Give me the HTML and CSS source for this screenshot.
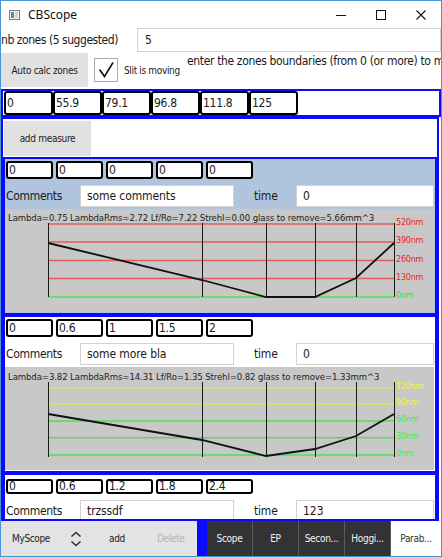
FILE: index.html
```html
<!DOCTYPE html>
<html>
<head>
<meta charset="utf-8">
<title>CBScope</title>
<link rel="stylesheet" href="styles.css">
</head>
<body>
<div class="window">
  <div class="titlebar">
    <svg class="appicon" width="11" height="10" viewBox="0 0 11 10">
      <rect x="0.5" y="0.5" width="10" height="9" fill="#f4f4f4" stroke="#7a7a7a"/>
      <rect x="2" y="2" width="3" height="6" fill="#3d9b86"/>
      <rect x="6" y="2" width="3" height="6" fill="#c9d3d0"/>
    </svg>
    <span class="title">CBScope</span>
    <div class="controls">
      <div class="ctl"><svg width="12" height="12" viewBox="0 0 12 12"><line x1="1" y1="6.5" x2="11" y2="6.5" stroke="#111" stroke-width="1"/></svg></div>
      <div class="ctl"><svg width="12" height="12" viewBox="0 0 12 12"><rect x="1.5" y="1.5" width="9" height="9" fill="none" stroke="#111" stroke-width="1"/></svg></div>
      <div class="ctl"><svg width="12" height="12" viewBox="0 0 12 12"><path d="M1.5 1.5 L10.5 10.5 M10.5 1.5 L1.5 10.5" stroke="#111" stroke-width="1.1"/></svg></div>
    </div>
  </div>

  <div class="row-nb">
    <span class="nb-label">nb zones (5 suggested)</span>
    <div class="field nb-field">5</div>
  </div>

  <div class="row-auto">
    <div class="btn auto-btn">Auto calc zones</div>
    <div class="checkbox">
      <svg width="24" height="24" viewBox="0 0 24 24"><path d="M5.5 11.5 L10.5 18.5 L19 4.5" fill="none" stroke="#111" stroke-width="1.6"/></svg>
    </div>
    <span class="slit">Slit is moving</span>
    <span class="hint">enter the zones boundaries (from 0 (or more) to max radius)</span>
  </div>

  <div class="zones">
    <div class="cell zcell">0</div>
    <div class="cell zcell">55.9</div>
    <div class="cell zcell">79.1</div>
    <div class="cell zcell">96.8</div>
    <div class="cell zcell">111.8</div>
    <div class="cell zcell">125</div>
  </div>

  <div class="scroll">
    <div class="add-row"><div class="btn add-btn">add measure</div></div>

    <div class="measure selected">
      <div class="cells">
        <div class="cell">0</div><div class="cell">0</div><div class="cell">0</div><div class="cell">0</div><div class="cell">0</div>
      </div>
      <div class="crow">
        <span class="clabel">Comments</span>
        <div class="field cinput">some comments</div>
        <span class="tlabel">time</span>
        <div class="field tinput">0</div>
      </div>
      <div class="panel">
        <svg class="chart" width="429" height="103" viewBox="0 0 429 103">
          <text class="ctitle" x="3" y="11.5">Lambda=0.75 LambdaRms=2.72 Lf/Ro=7.22 Strehl=0.00 glass to remove=5.66mm^3</text>
          <g stroke="#e25c5c" stroke-width="1.4">
            <line x1="43" y1="15" x2="389" y2="15"/>
            <line x1="43" y1="33" x2="389" y2="33"/>
            <line x1="43" y1="51.5" x2="389" y2="51.5"/>
            <line x1="43" y1="69.5" x2="389" y2="69.5"/>
          </g>
          <line x1="43" y1="88" x2="389" y2="88" stroke="#4fe04f" stroke-width="1.4"/>
          <g stroke="#1a1a1a" stroke-width="1">
            <line x1="43.5" y1="14" x2="43.5" y2="88"/>
            <line x1="197.5" y1="14" x2="197.5" y2="88"/>
            <line x1="261.5" y1="14" x2="261.5" y2="88"/>
            <line x1="310.5" y1="14" x2="310.5" y2="88"/>
            <line x1="351.5" y1="14" x2="351.5" y2="88"/>
            <line x1="389.5" y1="14" x2="389.5" y2="88"/>
          </g>
          <polyline points="43,34 197,71 261,88 310,88 351,69 389,34" fill="none" stroke="#111" stroke-width="1.8"/>
          <g class="axis">
            <text x="391" y="16" fill="#f02020">520nm</text>
            <text x="391" y="34" fill="#f02020">390nm</text>
            <text x="391" y="52.5" fill="#f02020">260nm</text>
            <text x="391" y="70.5" fill="#f02020">130nm</text>
            <text x="391" y="89" fill="#22ee22">0nm</text>
          </g>
        </svg>
      </div>
    </div>

    <div class="measure">
      <div class="cells">
        <div class="cell">0</div><div class="cell">0.6</div><div class="cell">1</div><div class="cell">1.5</div><div class="cell">2</div>
      </div>
      <div class="crow">
        <span class="clabel">Comments</span>
        <div class="field cinput">some more bla</div>
        <span class="tlabel">time</span>
        <div class="field tinput">0</div>
      </div>
      <div class="panel">
        <svg class="chart" width="429" height="103" viewBox="0 0 429 103">
          <text class="ctitle" x="3" y="12.5">Lambda=3.82 LambdaRms=14.31 Lf/Ro=1.35 Strehl=0.82 glass to remove=1.33mm^3</text>
          <g stroke="#e2e24e" stroke-width="1.4">
            <line x1="43" y1="20.7" x2="389" y2="20.7"/>
            <line x1="43" y1="37" x2="389" y2="37"/>
          </g>
          <g stroke="#4fe04f" stroke-width="1.4">
            <line x1="43" y1="54" x2="389" y2="54"/>
            <line x1="43" y1="70.7" x2="389" y2="70.7"/>
            <line x1="43" y1="88" x2="389" y2="88"/>
          </g>
          <g stroke="#1a1a1a" stroke-width="1">
            <line x1="43.5" y1="15" x2="43.5" y2="90"/>
            <line x1="197.5" y1="15" x2="197.5" y2="90"/>
            <line x1="261.5" y1="15" x2="261.5" y2="90"/>
            <line x1="310.5" y1="15" x2="310.5" y2="90"/>
            <line x1="351.5" y1="15" x2="351.5" y2="90"/>
            <line x1="389.5" y1="15" x2="389.5" y2="90"/>
          </g>
          <polyline points="43,47 197,73 261,89 310,82 351,69 389,47" fill="none" stroke="#111" stroke-width="1.8"/>
          <g class="axis">
            <text x="391" y="21.7" fill="#f2f24a">120nm</text>
            <text x="391" y="38" fill="#f2f24a">90nm</text>
            <text x="391" y="55" fill="#3cf03c">60nm</text>
            <text x="391" y="71.7" fill="#3cf03c">30nm</text>
            <text x="391" y="89" fill="#3cf03c">0nm</text>
          </g>
        </svg>
      </div>
    </div>

    <div class="measure compact">
      <div class="cells">
        <div class="cell">0</div><div class="cell">0.6</div><div class="cell">1.2</div><div class="cell">1.8</div><div class="cell">2.4</div>
      </div>
      <div class="crow">
        <span class="clabel">Comments</span>
        <div class="field cinput">trzssdf</div>
        <span class="tlabel">time</span>
        <div class="field tinput">123</div>
      </div>
    </div>
  </div>

  <div class="bottombar">
    <div class="tools">
      <span class="myscope">MyScope</span>
      <svg class="spin" width="12" height="16" viewBox="0 0 12 16">
        <path d="M1.5 5.5 L6 1.5 L10.5 5.5" fill="none" stroke="#333" stroke-width="1.6"/>
        <path d="M1.5 10.5 L6 14.5 L10.5 10.5" fill="none" stroke="#333" stroke-width="1.6"/>
      </svg>
      <span class="tool-add">add</span>
      <span class="tool-del">Delete</span>
    </div>
    <div class="gap"></div>
    <div class="tabs">
      <div class="tab">Scope</div>
      <div class="tab">EP</div>
      <div class="tab">Secon...</div>
      <div class="tab">Hoggi...</div>
      <div class="tab active">Parab...</div>
    </div>
  </div>
</div>
</body>
</html>
```

FILE: styles.css
```css
html, body {
  margin: 0;
  padding: 0;
  background: #ffffff;
}

.window {
  width: 442px;
  height: 557px;
  box-sizing: border-box;
  border: 1px solid #4a93d4;
  background: #ffffff;
  overflow: hidden;
  font-family: "DejaVu Sans Condensed", "Liberation Sans", sans-serif;
  color: #1a1a1a;
  display: flex;
  flex-direction: column;
}

/* title bar */
.titlebar {
  height: 27px;
  flex: none;
  display: flex;
  align-items: center;
  background: #ffffff;
}
.appicon {
  margin-left: 8px;
}
.title {
  margin-left: 8px;
  font-family: "Noto Sans", "Open Sans", sans-serif;
  font-size: 12px;
  color: #111;
}
.controls {
  margin-left: auto;
  display: flex;
  height: 27px;
}
.ctl {
  width: 40px;
  display: flex;
  align-items: center;
  justify-content: center;
}

/* row nb zones */
.row-nb {
  height: 25px;
  flex: none;
  display: flex;
  align-items: flex-start;
}
.nb-label {
  flex: none;
  width: 136px;
  font-size: 12px;
  letter-spacing: -0.45px;
  line-height: 24px;
  white-space: nowrap;
}
.field {
  box-sizing: border-box;
  background: #fff;
  border: 1px solid #d2d2d2;
  white-space: nowrap;
  overflow: hidden;
}
.nb-field {
  flex: 1;
  height: 24px;
  font-size: 12px;
  line-height: 22px;
  padding-left: 7px;
}

/* row auto calc */
.row-auto {
  height: 36px;
  flex: none;
  display: flex;
  align-items: flex-start;
  white-space: nowrap;
  overflow: hidden;
}
.row-auto > * {
  flex: none;
}
.btn {
  background: #e1e1e1;
  display: flex;
  align-items: center;
  justify-content: center;
  font-size: 10px;
  letter-spacing: -0.3px;
  color: #222;
}
.auto-btn {
  width: 87px;
  height: 34px;
}
.checkbox {
  width: 24px;
  height: 24px;
  margin-left: 6px;
  margin-top: 5px;
  box-sizing: border-box;
  border: 1px solid #a9a9a9;
  background: #fff;
}
.checkbox svg {
  display: block;
  margin: -1px 0 0 -1px;
}
.slit {
  width: 57px;
  margin-left: 6px;
  margin-top: 11px;
  font-size: 10px;
  letter-spacing: -0.35px;
  line-height: 14px;
}
.hint {
  margin-left: 6px;
  margin-top: 1px;
  font-size: 12px;
  letter-spacing: -0.35px;
  line-height: 14px;
}

/* zone boundaries */
.zones {
  flex: none;
  width: 440px;
  height: 28px;
  box-sizing: border-box;
  border: 2px solid #0a0aff;
  display: flex;
  padding-left: 1px;
  background: #fff;
}
.cell {
  flex: none;
  box-sizing: border-box;
  border: 2px solid #000;
  border-radius: 3px;
  background: #fff;
  font-size: 12px;
  letter-spacing: -0.3px;
  padding-left: 1px;
  white-space: nowrap;
  overflow: hidden;
}
.zcell {
  width: 49px;
  height: 24px;
  line-height: 20px;
}

/* scroll area */
.scroll {
  flex: none;
  width: 438px;
  height: 404px;
  box-sizing: border-box;
  border: 2px solid #0a0aff;
  overflow: hidden;
  background: #fff;
}
.add-row {
  height: 38px;
  box-sizing: border-box;
  padding: 2px 0 1px 1px;
}
.add-btn {
  width: 87px;
  height: 35px;
}

.measure {
  height: 158px;
  box-sizing: border-box;
  border: 2px solid #0a0aff;
  padding: 2px 0 1px 0;
  background: #fff;
}
.measure.selected {
  background: #b0c4de;
}
.cells {
  display: flex;
  gap: 3px;
  padding-left: 1px;
  height: 18px;
}
.cells .cell {
  width: 47px;
  height: 18px;
  line-height: 14px;
}
.measure.compact {
  padding-top: 4px;
}
.measure.compact .cells,
.measure.compact .cells .cell {
  height: 15px;
  line-height: 11px;
}
.crow {
  height: 30px;
  box-sizing: border-box;
  padding: 6px 0 2px 1px;
  display: flex;
  align-items: center;
  white-space: nowrap;
}
.crow > * {
  flex: none;
}
.clabel {
  width: 74px;
  font-size: 12px;
  letter-spacing: -0.3px;
  line-height: 22px;
}
.cinput {
  width: 154px;
  height: 22px;
  font-size: 12px;
  letter-spacing: -0.1px;
  line-height: 20px;
  padding-left: 6px;
}
.tlabel {
  margin-left: 20px;
  width: 22px;
  font-size: 12px;
  letter-spacing: -0.2px;
  line-height: 22px;
}
.tinput {
  margin-left: 20px;
  width: 138px;
  height: 22px;
  font-size: 12px;
  line-height: 20px;
  padding-left: 6px;
}
.panel {
  height: 103px;
  margin-right: 1px;
  background: #c8c8c8;
  box-sizing: border-box;
}
.chart {
  display: block;
}
.ctitle {
  font-family: "DejaVu Sans Condensed", "Liberation Sans", sans-serif;
  font-size: 9.5px;
  letter-spacing: -0.1px;
  fill: #222;
}
.axis text {
  font-family: "DejaVu Sans Condensed", "Liberation Sans", sans-serif;
  font-size: 9px;
  letter-spacing: -0.25px;
}

/* bottom bar */
.bottombar {
  flex: none;
  height: 35px;
  display: flex;
  white-space: nowrap;
}
.tools {
  flex: none;
  width: 196px;
  background: #e3e3e3;
  display: flex;
  align-items: center;
  font-size: 10px;
  letter-spacing: -0.35px;
}
.myscope {
  margin-left: 11px;
  color: #222;
}
.spin {
  margin-left: 20px;
}
.tool-add {
  margin-left: 27px;
  color: #222;
}
.tool-del {
  margin-left: 32px;
  color: #b4b4b4;
}
.gap {
  flex: none;
  width: 10px;
  background: #0a0aff;
}
.tabs {
  flex: 1;
  display: flex;
  background: #333;
}
.tab {
  flex: none;
  width: 45px;
  border-right: 1px solid #5c5c5c;
  background: #333;
  color: #f2f2f2;
  font-size: 10px;
  letter-spacing: -0.3px;
  display: flex;
  align-items: center;
  justify-content: center;
}
.tab.active {
  flex: 1;
  border-right: none;
  background: #fff;
  color: #333;
}
```
